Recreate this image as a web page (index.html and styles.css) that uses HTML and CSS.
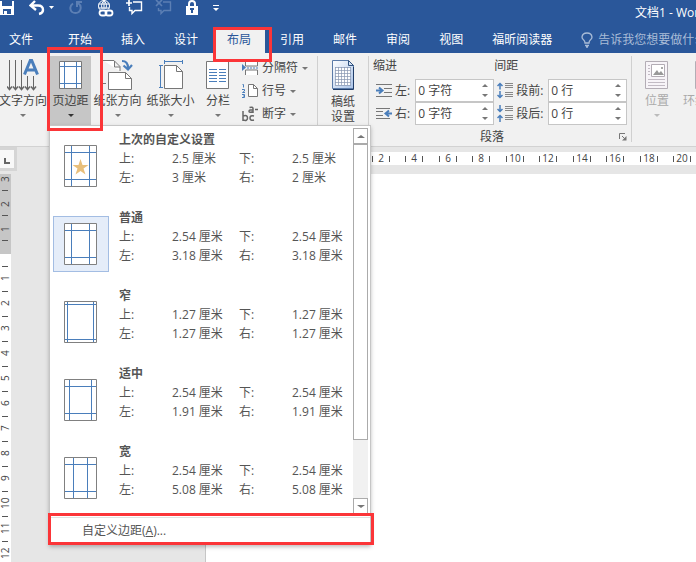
FILE: index.html
```html
<!DOCTYPE html>
<html lang="zh-CN">
<head>
<meta charset="utf-8">
<title>文档1 - Word</title>
<link rel="stylesheet" href="styles.css">
</head>
<body>
<header class="titlebar">
  <div class="quick">
    <button class="qbtn" aria-label="保存"><svg width="14" height="16" viewBox="0 0 14 16"><path d="M0 1h14v14H0z" fill="#fff"/><path d="M2 1h10v5H2zM3 9h8v5H3z" fill="#2a579a"/><path d="M4 11h3v3H4z" fill="#fff"/></svg></button>
    <button class="qbtn undo" aria-label="撤消"><svg width="27" height="16" viewBox="0 0 27 16"><path d="M6 1L1.500 5.500L7 10M2 5.500h7q5 0 5 4.500q0 3-4 4" fill="none" stroke="#fff" stroke-width="2.400"/><path d="M20 6h5l-2.500 3z" fill="#fff"/></svg></button>
    <button class="qbtn redo" aria-label="恢复"><svg width="14" height="16" viewBox="0 0 14 16"><path d="M4 3.500C-.5 6.500 1 13 6.500 13C12 13 13.500 6 9 3M8 7V2h5" fill="none" stroke="#5c7fb4" stroke-width="2"/></svg></button>
    <button class="qbtn link" aria-label="链接"><svg width="17" height="17" viewBox="0 0 17 17"><circle cx="7" cy="6" r="5.500" fill="none" stroke="#fff"/><path d="M1.500 4h11M1.500 8h11M7 0v11M7 .5q-5 5 0 11M7 .5q5 5 0 11" fill="none" stroke="#fff"/><path d="M4 9h13v8H1z" fill="#2a579a"/><rect x="2.500" y="10.500" width="7" height="5" rx="2.500" fill="none" stroke="#fff" stroke-width="1.800"/><rect x="8.500" y="10.500" width="7" height="5" rx="2.500" fill="none" stroke="#fff" stroke-width="1.800"/></svg></button>
    <button class="qbtn note" aria-label="新建批注"><svg width="17" height="16" viewBox="0 0 17 16"><path d="M7 2h8.500v8.500H9l-3 3v-3H3.500V7" fill="none" stroke="#fff" stroke-width="1.400"/><path d="M0 3h6M3 0v6" stroke="#fff" stroke-width="1.700"/></svg></button>
    <button class="qbtn note" aria-label="删除批注"><svg width="17" height="16" viewBox="0 0 17 16"><path d="M8 2h7.500v8.500H9l-3 3v-3H3.500V8" fill="none" stroke="#5c7fb4" stroke-width="1.400"/><path d="M1 0l6 6M7 0L1 6" stroke="#5c7fb4" stroke-width="1.700"/></svg></button>
    <button class="qbtn lock" aria-label="限制编辑"><svg width="12" height="16" viewBox="0 0 12 16"><path d="M3 8V4q0-3 3-3t3 3v4" fill="none" stroke="#fff" stroke-width="2"/><path d="M0 6h12v9H0z" fill="#fff"/><path d="M4 8h4v2H7v3H5v-3H4z" fill="#2a579a"/></svg></button>
    <button class="qbtn more" aria-label="自定义快速访问工具栏"><svg width="6" height="8" viewBox="0 0 6 8"><path d="M0 1.500h6" stroke="#fff"/><path d="M0 4h6L3 7z" fill="#fff"/></svg></button>
  </div>
  <h1 class="doc-title">文档1 - Word</h1>
</header>

<nav class="tabs">
  <button class="tab file">文件</button>
  <button class="tab">开始</button>
  <button class="tab">插入</button>
  <button class="tab">设计</button>
  <button class="tab active">布局<span class="mark"></span></button>
  <button class="tab">引用</button>
  <button class="tab">邮件</button>
  <button class="tab">审阅</button>
  <button class="tab">视图</button>
  <button class="tab">福昕阅读器</button>
  <button class="tell"><svg width="12" height="16" viewBox="0 0 12 16"><path d="M4 11Q4 9 2.500 7.800Q1 6.500 1 5Q1.500 1 6 1t5 4q0 1.500-1.500 2.800Q8 9 8 11zM4 13.500h4M5 15h2" fill="none" stroke="#a9bcd7" stroke-width="1.300"/></svg>告诉我您想要做什么...</button>
</nav>

<main>
<section class="ribbon">
  <div class="group setup">
    <button class="big first">
      <svg width="32" height="32" viewBox="0 0 32 32"><g stroke="#666" fill="none"><path d="M2.500 1v29M8.500 1v29M14.500 1v29M20.500 17v13M26.500 17v13"/><path d="M0 27.500l2.500 3l2.500-3M6 27.500l2.500 3l2.500-3M12 27.500l2.500 3l2.500-3M18 27.500l2.500 3l2.500-3M24 27.500l2.500 3l2.500-3" stroke-width="1.500"/></g><path d="M17.500 15.500L23.500 1h1l6 14.500M19.500 11h9" fill="none" stroke="#4a7ebb" stroke-width="3"/></svg>
      <span>文字方向</span><i class="caret"></i>
    </button>
    <div class="dropdown">
      <button class="big pressed" aria-expanded="true">
        <svg width="24" height="32" viewBox="0 0 24 32"><path d="M.5 2.500h22v27H.5z" fill="#fff" stroke="#777"/><path d="M5.500 3v26M17.500 3v26M1 7.500h21M1 24.500h21" stroke="#4a7ebb"/></svg>
        <span>页边距</span><i class="caret dark"></i>
      </button>
      <span class="mark"></span>
      <div class="menu">
        <div class="menu-body">
          <div class="options">
            <button class="option"><svg class="thumb" width="34" height="42" viewBox="0 0 34 42"><path d="M.5.5h32v41H.5z" fill="#fff" stroke="#808080"/><path d="M7.500 1v40M25.500 1v40M1 7.500h31M1 34.500h31" stroke="#4a7ebb"/><path d="M16.500 14l2 6h6l-5 3.500l2 6l-5-3.500l-5 3.500l2-6l-5-3.500h6z" fill="#e8bf7b"/></svg><span class="specs"><b>上次的自定义设置</b><span>上:</span><span>2.5 厘米</span><span>下:</span><span>2.5 厘米</span><span>左:</span><span>3 厘米</span><span>右:</span><span>2 厘米</span></span></button>
            <button class="option chosen"><svg class="thumb" width="34" height="42" viewBox="0 0 34 42"><path d="M.5.5h32v41H.5z" fill="#fff" stroke="#808080"/><path d="M7.500 1v40M25.500 1v40M1 7.500h31M1 34.500h31" stroke="#4a7ebb"/></svg><span class="specs"><b>普通</b><span>上:</span><span>2.54 厘米</span><span>下:</span><span>2.54 厘米</span><span>左:</span><span>3.18 厘米</span><span>右:</span><span>3.18 厘米</span></span></button>
            <button class="option"><svg class="thumb" width="34" height="42" viewBox="0 0 34 42"><path d="M.5.5h32v41H.5z" fill="#fff" stroke="#808080"/><path d="M3.500 1v40M29.500 1v40M1 3.500h31M1 38.500h31" stroke="#4a7ebb"/></svg><span class="specs"><b>窄</b><span>上:</span><span>1.27 厘米</span><span>下:</span><span>1.27 厘米</span><span>左:</span><span>1.27 厘米</span><span>右:</span><span>1.27 厘米</span></span></button>
            <button class="option"><svg class="thumb" width="34" height="42" viewBox="0 0 34 42"><path d="M.5.5h32v41H.5z" fill="#fff" stroke="#808080"/><path d="M5.500 1v40M27.500 1v40M1 7.500h31M1 34.500h31" stroke="#4a7ebb"/></svg><span class="specs"><b>适中</b><span>上:</span><span>2.54 厘米</span><span>下:</span><span>2.54 厘米</span><span>左:</span><span>1.91 厘米</span><span>右:</span><span>1.91 厘米</span></span></button>
            <button class="option"><svg class="thumb" width="34" height="42" viewBox="0 0 34 42"><path d="M.5.5h32v41H.5z" fill="#fff" stroke="#808080"/><path d="M9.500 1v40M23.500 1v40M1 7.500h31M1 34.500h31" stroke="#4a7ebb"/></svg><span class="specs"><b>宽</b><span>上:</span><span>2.54 厘米</span><span>下:</span><span>2.54 厘米</span><span>左:</span><span>5.08 厘米</span><span>右:</span><span>5.08 厘米</span></span></button>
          </div>
          <div class="scroll">
            <button class="arrow" aria-label="向上滚动"><i class="caret up wide"></i></button>
            <div class="handle"></div>
            <button class="arrow" aria-label="向下滚动"><i class="caret wide"></i></button>
          </div>
        </div>
        <div class="menu-foot"><button class="custom">自定义边距(<u>A</u>)...</button><span class="mark"></span></div>
      </div>
    </div>
    <button class="big">
      <svg width="30" height="32" viewBox="0 0 30 32"><path d="M0 1.500h11l6 6V12M11.500 2v6H17M0 24.500h3" fill="#fff" stroke="#777"/><path d="M5.500 13.500h17l6 6v11h-23z" fill="#fff" stroke="#777"/><path d="M22.500 13.500v6h6" fill="none" stroke="#777"/><path d="M19 2q6 0 6 7M20.500 6.500L25 10.500l4-4.500" fill="none" stroke="#4a7ebb" stroke-width="2.200"/></svg>
      <span>纸张方向</span><i class="caret"></i>
    </button>
    <button class="big">
      <svg width="26" height="32" viewBox="0 0 26 32"><path d="M6.500 6.500h12l6 6v17h-18z" fill="#fff" stroke="#777"/><path d="M18.500 6.500v6h6" fill="none" stroke="#777"/><path d="M6 2.500h19M6.500 1v4M24.500 1v4M2.500 6v23M1 6.500h4M1 28.500h4" fill="none" stroke="#4a7ebb"/></svg>
      <span>纸张大小</span><i class="caret"></i>
    </button>
    <button class="big cols">
      <svg width="24" height="32" viewBox="0 0 24 32"><path d="M.5 2.500h22v27H.5z" fill="#fff" stroke="#777"/><path d="M3 10.500h8M3 13.500h8M3 16.500h8M3 19.500h8M3 22.500h8M13 10.500h7M13 13.500h7M13 16.500h7M13 19.500h7M13 22.500h7" stroke="#4a7ebb"/></svg>
      <span>分栏</span><i class="caret"></i>
    </button>
    <div class="stack">
      <button class="small"><svg width="16" height="16" viewBox="0 0 16 16"><path d="M3.500 1v5h12V1M3.500 15V10h12v5" fill="#fff" stroke="#777"/><path d="M0 4l4 3.500L0 11z" fill="#4a7ebb"/><path d="M5 8h11" stroke="#4a7ebb" stroke-dasharray="2 1"/></svg>分隔符<i class="caret"></i></button>
      <button class="small"><svg width="16" height="16" viewBox="0 0 16 16"><path d="M6.500 1.500h5l4 4v8h-9z" fill="#fff" stroke="#777"/><path d="M11.500 1.500v4h4" fill="none" stroke="#777"/><path d="M.5 1.500h1v3M0 6.500h2.500v1.500L.5 9.500H3M0 11.500h2.500v3H0M1 13h1.500" fill="none" stroke="#4a7ebb"/></svg>行号<i class="caret"></i></button>
      <button class="small"><svg width="16" height="16" viewBox="0 0 16 16"><g fill="none" stroke="#666" stroke-width="1.500"><path d="M1 5v10M1 10q4.500-1.500 4.500 2t-4.500 2M12 10q-4-1-4 2t4 2"/><path d="M7.500 1.500q3.500-1 3.500 1V7M11 4q-4-.5-4 1.200t4 .5M13 3.500h3"/></g></svg>断字<i class="caret"></i></button>
    </div>
  </div>
  <div class="group paper">
    <button class="big">
      <svg width="24" height="32" viewBox="0 0 24 32"><defs><linearGradient id="g" x1="0" y1="0" x2="1" y2="1"><stop offset="0" stop-color="#fff"/><stop offset="1" stop-color="#a9c3e8"/></linearGradient></defs><path d="M1.500 1.500h16l5 5v23h-21z" fill="url(#g)" stroke="#5b7ba8"/><path d="M22.500 8v22.500H2" fill="none" stroke="#203c68"/><path d="M17.500 1.500v5h5z" fill="#d3e1f4" stroke="#31527f"/><path d="M4.500 9h15v17h-15z" fill="#fff"/><path d="M4 8.500h16M4 11.500h16M4 14.500h16M4 17.500h16M4 20.500h16M4 23.500h16M4 26.500h16M4.500 8v18M7.500 8v18M10.500 8v18M13.500 8v18M16.500 8v18M19.500 8v18" stroke="#8795b0" stroke-width=".7"/></svg>
      <span>稿纸<br>设置</span>
    </button>
  </div>
  <div class="group para">
    <div class="fields">
      <fieldset class="field-set">
        <legend>缩进</legend>
        <div class="field"><svg width="16" height="14" viewBox="0 0 16 14"><path d="M0 .5h16M8 4.500h8M8 8.500h8M0 12.500h16" stroke="#777"/><path d="M0 6.500h5M3 3.500l3.500 3L3 9.500" fill="none" stroke="#4a7ebb" stroke-width="2"/></svg><label for="l">左:</label><div class="spin"><input id="l" value="0 字符"><button aria-label="增加"><i class="caret up"></i></button><button aria-label="减少"><i class="caret"></i></button></div></div>
        <div class="field"><svg width="16" height="14" viewBox="0 0 16 14"><path d="M0 1.500h14M0 4.500h7M0 8.500h7M0 11.500h14" stroke="#777"/><path d="M16 6.500h-5M13 3.500l-3.500 3l3.500 3" fill="none" stroke="#4a7ebb" stroke-width="2"/></svg><label for="r">右:</label><div class="spin"><input id="r" value="0 字符"><button aria-label="增加"><i class="caret up"></i></button><button aria-label="减少"><i class="caret"></i></button></div></div>
      </fieldset>
      <fieldset class="field-set">
        <legend>间距</legend>
        <div class="field"><svg width="16" height="17" viewBox="0 0 16 17"><path d="M8 1.500h8M8 3.500h8M8 5.500h8M8 10.500h8M8 12.500h8M8 14.500h8" stroke="#888"/><path d="M3 7.500V2M.5 4L3 1.500L5.500 4M3 9v6M.5 13L3 15.500L5.500 13" fill="none" stroke="#4a7ebb" stroke-width="1.500"/></svg><label for="b">段前:</label><div class="spin"><input id="b" value="0 行"><button aria-label="增加"><i class="caret up"></i></button><button aria-label="减少"><i class="caret"></i></button></div></div>
        <div class="field"><svg width="16" height="17" viewBox="0 0 16 17"><path d="M8 1.500h8M8 3.500h8M8 5.500h8M8 10.500h8M8 12.500h8M8 14.500h8" stroke="#888"/><path d="M3 0v6M.5 4L3 6.500L5.500 4M3 17v-6M.5 13L3 10.500L5.500 13" fill="none" stroke="#4a7ebb" stroke-width="1.500"/></svg><label for="a">段后:</label><div class="spin"><input id="a" value="0 行"><button aria-label="增加"><i class="caret up"></i></button><button aria-label="减少"><i class="caret"></i></button></div></div>
      </fieldset>
    </div>
    <div class="caption"><span>段落</span><button class="launch" aria-label="段落设置"><svg width="8" height="8" viewBox="0 0 8 8"><path d="M.5 6V.5H6M3 3l3 3" fill="none" stroke="#777"/><path d="M7.500 3v4.500H3z" fill="#777"/></svg></button></div>
  </div>
  <div class="group arrange">
    <button class="big" disabled>
      <svg width="24" height="32" viewBox="0 0 24 32"><path d="M.5 2.500h22v27H.5z" fill="#f7f4f8" stroke="#b3adb5"/><path d="M6.500 5.500h13v12h-13z" fill="#fff" stroke="#b3adb5"/><path d="M8 16l4-5l2 3l2-2l3 4z" fill="#999"/><path d="M16 8h2v2h-2z" fill="#aaa"/><path d="M3 6.500h2M3 9.500h2M3 12.500h2M3 15.500h2M3 20.500h17M3 23.500h17M3 26.500h17" stroke="#c2bbc4"/></svg>
      <span>位置</span><i class="caret"></i>
    </button>
    <button class="big" disabled>
      <svg width="24" height="32" viewBox="0 0 24 32"><path d="M.5 2.500h22v27H.5z" fill="#f7f4f8" stroke="#b3adb5"/></svg>
      <span>环绕文字</span><i class="caret"></i>
    </button>
  </div>
</section>

<section class="workspace">
  <div class="corner"><button class="tabstop" aria-label="制表符"><svg width="6" height="6" viewBox="0 0 6 6"><path d="M1 0v5h5" fill="none" stroke="#666" stroke-width="2"/></svg></button></div>
  <div class="hruler">
    <span>2</span><span>4</span><span>6</span><span>8</span><span>10</span><span>12</span><span>14</span><span>16</span><span>18</span><span>20</span>
  </div>
  <div class="vruler">
    <div class="vmargin"><span>3</span><span>2</span><span>1</span></div>
    <div class="vbody"><span>1</span><span>2</span><span>3</span><span>4</span><span>5</span><span>6</span><span>7</span><span>8</span><span>9</span><span>10</span><span>11</span><span>12</span></div>
  </div>
  <article class="page"></article>
</section>
</main>
</body>
</html>
```
FILE: styles.css
```css
* { box-sizing: border-box; }

html, body { height: 100%; }

body {
  margin: 0;
  display: flex;
  flex-direction: column;
  overflow: hidden;
  background: #e6e6e6;
  color: #444;
  font: 12px/16px "Open Sans", "Noto Sans CJK SC", sans-serif;
}

button, input {
  font: inherit;
  color: inherit;
  margin: 0;
  padding: 0;
  border: 0;
  background: none;
}

svg { display: block; flex: none; }

/* Title bar */
.titlebar {
  display: flex;
  flex: none;
  justify-content: space-between;
  height: 27px;
  background: #2a579a;
  color: #fff;
}

.quick { display: flex; align-items: flex-start; }
.undo { margin-left: 15px; }
.redo { margin-left: 13px; }
.link { margin-left: 14px; }
.note { margin-left: 12px; }
.lock { margin-left: 14px; }
.more { margin: 4px 0 0 15px; }

.doc-title {
  flex: none;
  width: 61px;
  margin: 5px 0 0;
  font-size: 12px;
  font-weight: 400;
  white-space: nowrap;
}

/* Tabs */
.tabs {
  display: flex;
  flex: none;
  gap: 1px;
  height: 26px;
  background: #2a579a;
  color: #fff;
}

.tab {
  flex: none;
  position: relative;
  padding: 0 14px;
  white-space: nowrap;
}
.tab.file { padding: 0 20px 0 9px; }
.tab.active { background: #f1f1f1; color: #2a579a; }

.tell {
  display: flex;
  flex: none;
  align-items: center;
  gap: 5px;
  margin-left: 14px;
  color: #a9bcd7;
}

/* Red callout frames */
.mark {
  position: absolute;
  z-index: 20;
  border: 3px solid #fb3538;
  pointer-events: none;
}
.tab .mark { inset: 0 -7px -9px 0; }
.dropdown > .mark { inset: -9px -12px -6px -3px; }
.menu-foot .mark { inset: -2px -4px -1px -2px; }

main {
  display: flex;
  flex: 1;
  flex-direction: column;
  min-height: 0;
}

/* Ribbon */
.ribbon {
  display: flex;
  flex: none;
  height: 94px;
  padding-top: 3px;
  background: #f1f1f1;
  border-bottom: 1px solid #d2d2d2;
}

.group { display: flex; flex: none; align-items: flex-start; margin-bottom: 4px; }
.group + .group { border-left: 1px solid #d0d0d0; }

.caret {
  display: block;
  border: 3px solid transparent;
  border-top-color: #777;
  border-bottom: 0;
}
.caret.up { border-top: 0; border-bottom: 3px solid #777; }
.caret.dark { border-top-color: #333; }
.caret.wide { border-left-width: 4px; border-right-width: 4px; }

.big {
  display: flex;
  flex: none;
  flex-direction: column;
  align-items: center;
  height: 69px;
  padding-top: 3px;
  width: 53px;
  white-space: nowrap;
}
.big span { margin-top: 2px; line-height: 16px; }
.big .caret { margin-top: 5px; }
.big.first { width: 46px; margin-right: 4px; }
.big.pressed { width: 41px; background: #c6c6c6; }
.big.cols { width: 42px; }
.big:disabled { color: #aaa; }
.big:disabled .caret { border-top-color: #bbb; }

.stack { display: flex; flex-direction: column; gap: 7px; margin-top: 4px; padding-left: 3px; width: 78px; }
.small { display: flex; align-items: center; gap: 4px; white-space: nowrap; }

.paper .big, .arrange .big { width: 50px; }
.paper .big span { margin-top: 3px; line-height: 15px; }

.para { flex-direction: column; width: 263px; padding: 2px 0 0 4px; }
.fields { display: flex; }
.field-set { margin: 0; padding: 0; border: 0; min-width: 0; }
legend { padding: 0; margin: 2px 0 5px; }
.field { display: flex; align-items: center; height: 23px; }
.field svg { margin-left: 3px; }
.field label { flex: 1; padding: 0 5px 0 3px; white-space: nowrap; }

.spin {
  display: grid;
  grid-template-columns: 1fr 16px;
  grid-template-rows: 1fr 1fr;
  width: 79px;
  height: 23px;
  border: 1px solid #c6c6c6;
  background: #fff;
}
.spin input { grid-row: 1 / 3; min-width: 0; width: 100%; padding-left: 2px; outline: 0; }
.spin button { display: grid; place-items: center; }

.caption { display: flex; align-items: center; width: 100%; margin-top: 4px; padding-right: 4px; }
.caption span { flex: 1; padding-right: 8px; text-align: center; }

/* Margins menu */
.dropdown { position: relative; flex: none; }

.menu {
  position: absolute;
  z-index: 10;
  top: 100%;
  left: -1px;
  width: 322px;
  border: 1px solid #c6c6c6;
  background: #fff;
  color: #555;
  box-shadow: 0 2px 4px rgba(0, 0, 0, .25);
}

.menu-body { display: flex; height: 388px; padding: 2px 2px 0 3px; }
.options { flex: 1; padding-top: 2px; overflow: hidden; }

.option {
  display: flex;
  width: 100%;
  height: 78px;
  text-align: left;
}
.thumb {
  width: 56px;
  height: 56px;
  margin: 8px 10px 0 0;
  padding: 6px 10px;
  border: 1px solid transparent;
}
.chosen .thumb { background: #e5edf9; border-color: #a3bde3; }

.specs {
  display: grid;
  flex: 1;
  grid-template-columns: 53px 67px 53px 1fr;
  align-content: start;
  line-height: 19px;
  white-space: nowrap;
}
.specs b { grid-column: 1 / 5; }

.scroll { display: flex; flex-direction: column; width: 15px; background: #f1f1f1; }
.arrow {
  display: grid;
  place-items: center;
  height: 16px;
  border: 1px solid #ababab;
  background: #fff;
}
.handle { height: 296px; margin-bottom: auto; border: 1px solid #ababab; background: #fff; }

.menu-foot { position: relative; margin-top: 1px; padding-top: 2px; }
.custom {
  display: block;
  width: 100%;
  height: 27px;
  padding-left: 32px;
  border-top: 1px solid #e1e1e1;
  text-align: left;
}

/* Document area */
.workspace {
  display: grid;
  flex: 1;
  grid-template: 27px 1fr / 11px 1fr;
  min-height: 0;
  overflow: hidden;
}

.corner {
  width: 17px;
  height: 24px;
  padding: 3px 3px 3px 0;
  background: #d5d5d5;
}
.tabstop { display: grid; place-items: center; width: 14px; height: 18px; padding: 4px 0 0; background: #f8f8f8; }

.hruler {
  display: flex;
  height: 13px;
  margin: 5px 0 0 194px;
  padding-left: 167px;
  overflow: hidden;
  background: #fff;
  font-size: 10px;
  line-height: 13px;
}
.hruler span {
  flex: none;
  width: 33px;
  padding-right: 15px;
  text-align: center;
  background: linear-gradient(#555, #555) 0 4px / 1px 6px no-repeat, linear-gradient(#555, #555) 17px 4px / 1px 6px no-repeat;
}
.hruler span:nth-child(even) { width: 34px; padding-right: 16px; }

.vruler { overflow: hidden; background: #fff; font-size: 10px; line-height: 11px; }
.vruler span {
  display: block;
  width: 11px;
  height: 25px;
  writing-mode: vertical-rl;
  transform: rotate(180deg);
  text-align: center;
}
.vmargin { height: 80px; background: #c6c6c6; }
.vmargin span { padding-top: 14px; background: linear-gradient(#555, #555) 3px 8px / 6px 1px no-repeat; }
.vbody { padding-top: 12px; }
.vbody span { background: linear-gradient(#555, #555) 3px 24px / 6px 1px no-repeat; }

.page { margin-left: 194px; border-left: 1px solid #c6c6c6; background: #fff; }
```
